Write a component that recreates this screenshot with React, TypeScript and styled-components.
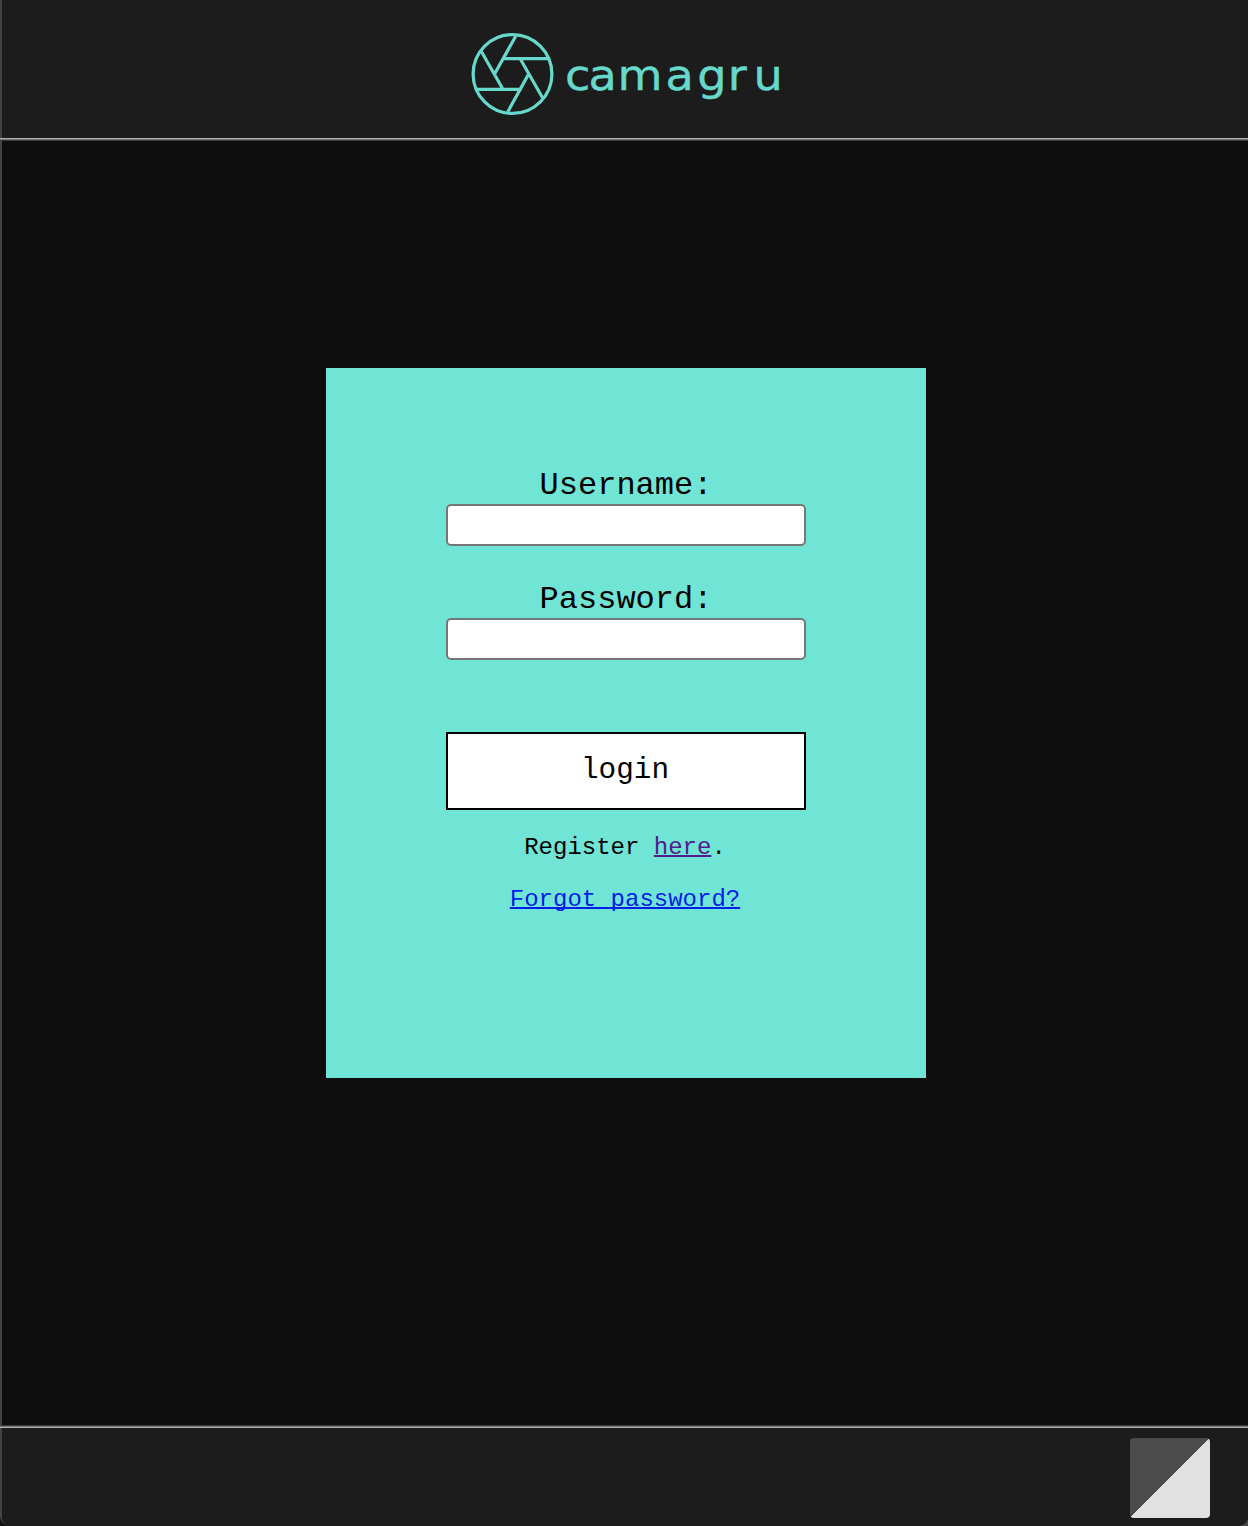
import React from "react";
import styled, { createGlobalStyle } from "styled-components";

const GlobalStyle = createGlobalStyle`
  * { box-sizing: border-box; }
  body { margin: 0; background: linear-gradient(to right, #111 50%, #484848 50%); }
`;

const Page = styled.div`
  height: 1526px;
  display: flex;
  flex-direction: column;
  background: #0e0e0e;
  border-left: 2px solid #444;
  border-radius: 0 0 10px 10px;
  font-family: "Liberation Mono", "Courier New", monospace;
  color: #000;
`;

const Header = styled.header`
  height: 138px;
  flex: none;
  display: flex;
  justify-content: center;
  padding-top: 32px;
  background: #1c1c1c;
`;

const Rule = styled.div<{ $flip?: boolean }>`
  height: 3px;
  flex: none;
  margin-left: -2px;
  background: linear-gradient(
    ${(p) => (p.$flip ? "to top" : "to bottom")},
    #b0b0b0 0 1px,
    #777 1px 2px,
    #3a3a3a 2px 3px
  );
`;

const Logo = styled.svg`
  width: 316px;
  height: 84px;
  margin-left: 3px;
  overflow: visible;
`;

const Wordmark = styled.text`
  font-family: "DejaVu Sans", sans-serif;
  font-size: 42px;
  fill: #66d9cb;
  stroke: #66d9cb;
  stroke-width: 0.4px;
`;

const Main = styled.main`
  flex: 1;
  padding-top: 227px;
  display: flex;
  justify-content: center;
  align-items: flex-start;
`;

const Card = styled.form`
  width: 600px;
  height: 710px;
  margin-left: 2px;
  padding: 100px 120px 0;
  display: flex;
  flex-direction: column;
  background: #70e5d5;
  text-align: center;
`;

const Field = styled.label`
  display: flex;
  flex-direction: column;
  height: 78px;
  margin-bottom: 36px;
  font-size: 32px;
  line-height: 36px;
`;

const Input = styled.input`
  width: 360px;
  height: 42px;
  border: 2px solid #767676;
  border-radius: 5px;
  background: #fff;
  outline: none;
`;

const LoginButton = styled.button`
  height: 78px;
  margin-top: 36px;
  padding: 0 2px 2px 0;
  border: 2px solid #000;
  background: #fff;
  color: #000;
  font: 29.333px "Liberation Mono", monospace;
`;

const Note = styled.p`
  margin: 24px 2px 0 0;
  font-size: 24px;
  line-height: 28px;
`;

const Link = styled.a<{ $visited?: boolean }>`
  color: ${(p) => (p.$visited ? "#551a8b" : "#001ee8")};
  text-decoration: underline;
  text-decoration-thickness: 2px;
  text-decoration-skip-ink: none;
`;

const Footer = styled.footer`
  height: 98px;
  flex: none;
  display: flex;
  justify-content: flex-end;
  padding: 10px 38px 0 0;
  border-radius: 0 0 10px 8px;
  background: #1c1c1c;
`;

const Toggle = styled.button`
  width: 80px;
  height: 80px;
  padding: 0;
  border: 0;
  border-radius: 4px;
  background: linear-gradient(135deg, #4b4b4b 50%, #e1e1e1 50%);
`;

export default function App() {
  return (
    <>
      <GlobalStyle />
      <Page>
        <Header>
          <Logo viewBox="0 0 316 84">
            <g fill="none" stroke="#66d9cb" strokeWidth="3.2">
              <circle cx="43.5" cy="42" r="39.4" />
              <path d="M46.8 4 L25.8 41.5 M12.1 19 L33.8 57 M7.5 57.4 H52.8 M38.8 79.7 L59.5 42.3 M51.5 27.3 L73.5 65.7 M34.8 26.7 H79" />
            </g>
            <Wordmark
              transform="scale(1.1 1)"
              x="87.3 108.6 135 178.6 207.5 235.2 258.6"
              y="58"
            >
              camagru
            </Wordmark>
          </Logo>
        </Header>
        <Rule />
        <Main>
          <Card onSubmit={(e) => e.preventDefault()}>
            <Field>
              Username:
              <Input type="text" />
            </Field>
            <Field>
              Password:
              <Input type="password" />
            </Field>
            <LoginButton>login</LoginButton>
            <Note>
              Register <Link href="#" $visited>here</Link>.
            </Note>
            <Note>
              <Link href="#">Forgot password?</Link>
            </Note>
          </Card>
        </Main>
        <Rule $flip />
        <Footer>
          <Toggle type="button" />
        </Footer>
      </Page>
    </>
  );
}
